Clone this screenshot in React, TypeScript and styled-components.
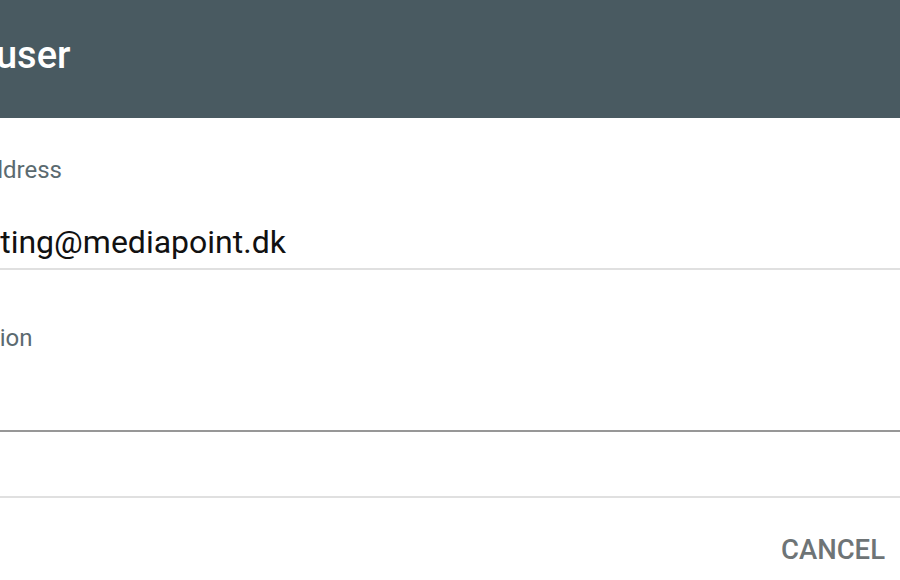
import styled, { createGlobalStyle } from "styled-components";

const GlobalStyle = createGlobalStyle`
  html, body {
    margin: 0;
    padding: 0;
    background: #ffffff;
  }
  body {
    font-family: Roboto, "Noto Sans", "Liberation Sans", sans-serif;
    overflow: hidden;
  }
`;

const Page = styled.div`
  width: 900px;
  height: 580px;
  overflow: hidden;
  background: #ffffff;
`;

const Dialog = styled.div`
  width: 1085px;
  margin-left: -137px;
  background: #ffffff;
`;

const Header = styled.div`
  height: 118px;
  box-sizing: border-box;
  padding: 35px 48px 0;
  background: #495a61;
`;

const Title = styled.h2`
  margin: 0;
  font-size: 38px;
  line-height: 40px;
  font-weight: 500;
  color: #ffffff;
  white-space: nowrap;
`;

const Body = styled.div`
  padding: 40px 48px 0;
`;

const Field = styled.div<{ $gap?: number }>`
  margin-top: ${(props) => props.$gap ?? 0}px;
  display: flex;
  flex-direction: column;
`;

const Label = styled.label`
  font-size: 24px;
  line-height: 24px;
  color: #5b6a70;
  white-space: nowrap;
`;

const InputRow = styled.div<{ $height: number; $focused?: boolean }>`
  height: ${(props) => props.$height}px;
  display: flex;
  align-items: flex-end;
  padding-bottom: 7px;
  box-sizing: border-box;
  border-bottom: 2px solid ${(props) => (props.$focused ? "#979797" : "#e0e0e0")};
`;

const Input = styled.input`
  width: 100%;
  height: 38px;
  padding: 0;
  border: none;
  outline: none;
  background: transparent;
  font-family: inherit;
  font-size: 32px;
  line-height: 38px;
  color: #111111;
`;

const Spacer = styled.div`
  height: 64px;
  border-bottom: 2px solid #e0e0e0;
`;

const Actions = styled.div`
  display: flex;
  justify-content: flex-end;
  padding: 34px 47px 0 0;
`;

const TextButton = styled.button`
  border: none;
  background: transparent;
  padding: 0 16px;
  font-family: inherit;
  font-size: 27.5px;
  line-height: 36px;
  font-weight: 500;
  color: #6e7476;
  text-transform: uppercase;
  cursor: pointer;
`;

const App = () => {
  return (
    <Page>
      <GlobalStyle />
      <Dialog>
        <Header>
          <Title>New user</Title>
        </Header>
        <Body>
          <Field>
            <Label>Email address</Label>
            <InputRow $height={88}>
              <Input readOnly defaultValue="marketing@mediapoint.dk" />
            </InputRow>
          </Field>
          <Field $gap={56}>
            <Label>Description</Label>
            <InputRow $height={82} $focused>
              <Input readOnly defaultValue="" />
            </InputRow>
          </Field>
          <Spacer />
        </Body>
        <Actions>
          <TextButton>Cancel</TextButton>
        </Actions>
      </Dialog>
    </Page>
  );
};

export default App;
